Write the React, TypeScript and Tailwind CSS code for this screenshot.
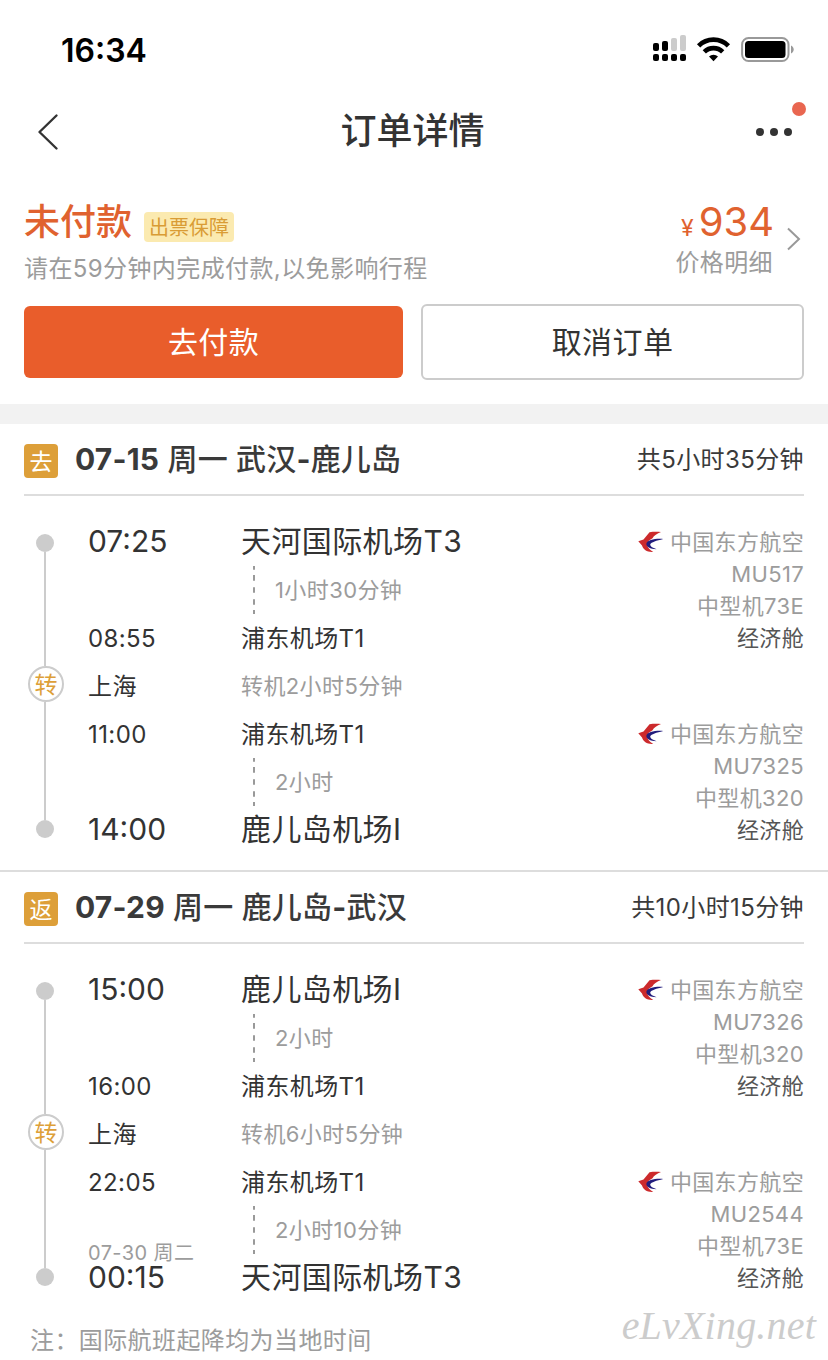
import React from 'react';

interface Leg {
    airline: string;
    flight: string;
    plane: string;
    cabin: string;
}

interface Trip {
    tag: string;
    date: string;
    total: string;
    start: string;
    from: string;
    firstDuration: string;
    arrive: string;
    arriveAt: string;
    city: string;
    transfer: string;
    depart: string;
    departFrom: string;
    secondDuration: string;
    end: string;
    to: string;
    nextDay?: string;
    legs: Leg[];
}

const trips: Trip[] = [
    {
        tag: '去',
        date: '07-15 周一 武汉-鹿儿岛',
        total: '共5小时35分钟',
        start: '07:25',
        from: '天河国际机场T3',
        firstDuration: '1小时30分钟',
        arrive: '08:55',
        arriveAt: '浦东机场T1',
        city: '上海',
        transfer: '转机2小时5分钟',
        depart: '11:00',
        departFrom: '浦东机场T1',
        secondDuration: '2小时',
        end: '14:00',
        to: '鹿儿岛机场I',
        legs: [
            { airline: '中国东方航空', flight: 'MU517', plane: '中型机73E', cabin: '经济舱' },
            { airline: '中国东方航空', flight: 'MU7325', plane: '中型机320', cabin: '经济舱' },
        ],
    },
    {
        tag: '返',
        date: '07-29 周一 鹿儿岛-武汉',
        total: '共10小时15分钟',
        start: '15:00',
        from: '鹿儿岛机场I',
        firstDuration: '2小时',
        arrive: '16:00',
        arriveAt: '浦东机场T1',
        city: '上海',
        transfer: '转机6小时5分钟',
        depart: '22:05',
        departFrom: '浦东机场T1',
        secondDuration: '2小时10分钟',
        end: '00:15',
        to: '天河国际机场T3',
        nextDay: '07-30 周二',
        legs: [
            { airline: '中国东方航空', flight: 'MU7326', plane: '中型机320', cabin: '经济舱' },
            { airline: '中国东方航空', flight: 'MU2544', plane: '中型机73E', cabin: '经济舱' },
        ],
    },
];

const StatusBar: React.FC = () => (
    <div className="flex h-[100px] items-center justify-between pl-[61px] pr-[34px] text-black">
        <span className="mt-0.5 text-[32px] font-semibold leading-none">16:34</span>
        <svg className="mb-0.5" width="142" height="30" viewBox="652 34 142 30">
            <g>
                <rect x="653" y="43" width="6" height="8" rx="2" />
                <rect x="662" y="41" width="6" height="10" rx="2" />
                <rect x="671" y="38" width="6" height="13" rx="2" fill="#ccc" />
                <rect x="680" y="35" width="6" height="16" rx="2" fill="#ccc" />
                <rect x="653" y="54" width="6" height="7" rx="2" />
                <rect x="662" y="54" width="6" height="7" rx="2" />
                <rect x="671" y="54" width="6" height="7" rx="2" />
                <rect x="680" y="54" width="6" height="7" rx="2" />
            </g>
            <g fill="none" stroke="#000" strokeWidth="4.6">
                <path d="M698.6 45.8a21 21 0 0 1 29.8 0" />
                <path d="M704.3 51.9a13 13 0 0 1 18.4 0" />
            </g>
            <path d="M709 56.6a6.5 6.5 0 0 1 9 0l-4.5 4.6z" />
            <rect x="742.1" y="38" width="46.4" height="23" rx="6.5" fill="none" stroke="#999" strokeWidth="2" />
            <rect x="745" y="41" width="40.5" height="17" rx="3.5" />
            <path d="M791 45.5c3.6 1.6 3.6 6.4 0 8z" fill="#999" />
        </svg>
    </div>
);

const NavBar: React.FC = () => (
    <div className="flex h-[76px] items-start justify-between pl-[37px] pr-[22px] text-[#333]">
        <svg className="mt-[12px]" width="52" height="40" viewBox="0 0 52 40" fill="none" stroke="currentColor" strokeWidth="2.4" strokeLinecap="round" strokeLinejoin="round">
            <path d="M19.5 3.5 2.5 20l17 16.5" />
        </svg>
        <h1 className="pr-[18px] text-[36px] font-medium leading-[62px]">订单详情</h1>
        <svg width="52" height="44" viewBox="754 100 52 44" fill="currentColor">
            <circle cx="760" cy="132" r="4" />
            <circle cx="774" cy="132" r="4" />
            <circle cx="788" cy="132" r="4" />
            <circle cx="799" cy="109" r="7" fill="#e96650" />
        </svg>
    </div>
);

const Summary: React.FC = () => (
    <div className="h-[228px] px-6">
        <div className="flex h-[128px] justify-between pt-[22px]">
            <div>
                <div className="flex h-[48px] items-center">
                    <span className="text-[36px] font-medium leading-[50px] text-[#e0622f]">未付款</span>
                    <span className="ml-3 mt-[9px] h-[30px] rounded bg-[#fbeab0] px-[5px] text-[20px] font-[370] leading-[32px] text-[#d99c35]">出票保障</span>
                </div>
                <p className="text-[24px] font-[370] leading-[46px] tracking-[0.4px] text-[#9c9c9c]">请在59分钟内完成付款,以免影响行程</p>
            </div>
            <div className="flex">
                <div className="text-right">
                    <div className="-mr-px flex h-[44px] items-baseline justify-end text-[#e0622f]">
                        <span className="mr-[5px] text-[23px] font-[370] leading-[48px]">¥</span>
                        <span className="text-[40px] leading-[48px]">934</span>
                    </div>
                    <p className="text-[24px] font-[370] leading-[41px] tracking-[0.4px] text-[#9c9c9c]">价格明细</p>
                </div>
                <svg className="ml-[13px] mr-[3px] mt-[29px]" width="15" height="24" viewBox="0 0 15 24" fill="none" stroke="#999" strokeWidth="2">
                    <path d="M2 1.5 13 12 2 22.5" />
                </svg>
            </div>
        </div>
        <div className="flex items-center gap-[18px]">
            <button className="h-[72px] w-[379px] rounded-md bg-[#e95d2b] text-[30px] font-[370] tracking-[0.4px] text-white">去付款</button>
            <button className="h-[76px] flex-1 rounded-md border-2 border-[#ccc] text-[30px] font-[370] tracking-[0.4px] text-[#333]">取消订单</button>
        </div>
    </div>
);

const Dashes: React.FC = () => (
    <svg className="ml-3 mr-5" width="2" height="48" viewBox="0 0 2 48">
        <path d="M1 0v48" stroke="#999" strokeWidth="2" strokeDasharray="3.7 5.3 5.7 6.6 5.4 6.6 5.4 5.3 4 9" />
    </svg>
);

const AirlineLogo: React.FC = () => (
    <svg className="mr-[6px]" width="26" height="22" viewBox="0 0 26 22">
        <path d="M23 1C19 .6 15 .7 11.5 1.2L5.5 8.600.3 10.200 4 14.500C5.500 19 9 21.300 15.200 20.900 11 18.500 9 16 9.200 12.800 9.500 10 12 8.800 14.500 7.200 16 4.500 19 2.500 23 1z" fill="#cc2a2c" />
        <path d="M25.2 7.900C17 7.200 9 9.300 8.400 12.600 8 15.700 12 18.200 18.500 18.200 14.500 16.800 11.800 15.200 12.300 13.300 13.200 11 18.500 9.600 25.200 7.900z" fill="#211c7c" />
    </svg>
);

const LegInfo: React.FC<{ leg: Leg }> = ({ leg }) => (
    <div className="flex flex-col items-end text-[22px] font-[370] leading-8 tracking-[0.35px] text-[#9c9c9c]">
        <div className="flex items-center"><AirlineLogo />{leg.airline}</div>
        <div>{leg.flight}</div>
        <div>{leg.plane}</div>
        <div className="text-[#555]">{leg.cabin}</div>
    </div>
);

const TripSection: React.FC<{ trip: Trip }> = ({ trip }) => (
    <section>
        <header className="mx-6 flex h-[72px] items-center border-b-2 border-[#ddd] text-[#3a3a3a]">
            <span className="mt-[3px] size-[34px] rounded bg-[#dd9f39] text-center text-[23px] leading-[36px] text-white">{trip.tag}</span>
            <h2 className="ml-[17px] flex-1 text-[30px] font-medium leading-[60px] tracking-[0.2px]">
                {trip.date.split(/([\d-]+)/).map((part, i) => (
                    <span key={i} className={i % 2 ? 'font-bold' : ''}>{part}</span>
                ))}
            </h2>
            <span className="mt-0.5 text-[24px] font-[370] tracking-[0.4px]">{trip.total}</span>
        </header>
        <div className="mt-[22px] flex h-[336px] pl-7 pr-6 text-[24px] font-[370] leading-[48px] tracking-[0.4px] text-[#333]">
            <div className="flex w-[34px] flex-col items-center py-4">
                <div className="size-[18px] rounded-full bg-[#ccc]"></div>
                <div className="h-[114px] w-0.5 bg-[#ccc]"></div>
                <div className="ml-0.5 size-9 shrink-0 rounded-full border-2 border-[#ccc] text-center text-[23px] leading-[34px] tracking-normal text-[#dd9f39]">转</div>
                <div className="h-[118px] w-0.5 bg-[#ccc]"></div>
                <div className="size-[18px] rounded-full bg-[#ccc]"></div>
            </div>
            <div className="ml-[26px] w-[153px]">
                <div className="h-24 text-[30px] leading-[47px] tracking-normal">{trip.start}</div>
                <div className="h-12 leading-[50px]">{trip.arrive}</div>
                <div className="h-12 leading-[50px]">{trip.city}</div>
                <div className="h-12 leading-[50px]">{trip.depart}</div>
                <div className="h-12 pt-[34px] text-[20px] leading-[26px] text-[#9c9c9c]">{trip.nextDay}</div>
                <div className="text-[30px] leading-[47px] tracking-normal">{trip.end}</div>
            </div>
            <div className="flex-1">
                <div className="h-12 text-[30px] leading-[47px] tracking-[0.4px]">{trip.from}</div>
                <div className="flex text-[22px] text-[#9c9c9c]"><Dashes />{trip.firstDuration}</div>
                <div className="h-12 leading-[50px]">{trip.arriveAt}</div>
                <div className="text-[22px] text-[#9c9c9c]">{trip.transfer}</div>
                <div className="h-12 leading-[50px]">{trip.departFrom}</div>
                <div className="flex text-[22px] text-[#9c9c9c]"><Dashes />{trip.secondDuration}</div>
                <div className="h-12 text-[30px] leading-[47px] tracking-[0.4px]">{trip.to}</div>
            </div>
            <div className="flex flex-col justify-start gap-16 pt-2">
                {trip.legs.map((leg) => <LegInfo key={leg.flight} leg={leg} />)}
            </div>
        </div>
    </section>
);

const App: React.FC = () => {
    return (
        <div className="h-[1360px] w-[828px] overflow-hidden bg-white font-['Inter','Noto_Sans_CJK_SC',sans-serif]">
            <StatusBar />
            <NavBar />
            <Summary />
            <div className="h-5 bg-[#f2f2f2]"></div>
            <TripSection trip={trips[0]} />
            <div className="mt-4 h-0.5 bg-[#ddd]"></div>
            <TripSection trip={trips[1]} />
            <footer className="flex h-[58px] items-start justify-between pl-[30px] pr-[12px]">
                <p className="pt-[15px] text-[24px] font-[370] leading-[48px] tracking-[0.4px] text-[#9c9c9c]">注：国际航班起降均为当地时间</p>
                <span className="font-['Liberation_Serif',serif] text-[40px] italic leading-[48px] tracking-[0.2px] text-[#ccc]">eLvXing.net</span>
            </footer>
        </div>
    );
}

export default App;
